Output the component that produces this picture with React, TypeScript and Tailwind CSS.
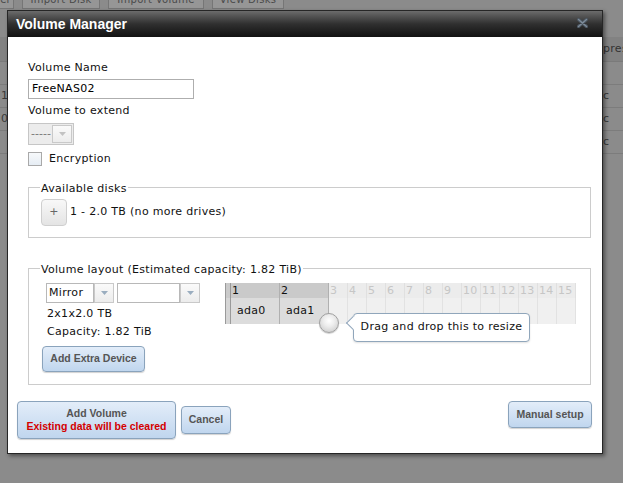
import React from 'react'

const smallCols = [3, 4, 5, 6, 7, 8, 9, 10, 11, 12, 13, 14, 15]

const blueButton =
  "rounded-[4px] border border-[#8aa3bc] bg-linear-to-b from-[#e3edf9] to-[#c0d6ee] shadow-[0_1px_1px_rgba(0,0,0,0.18)] font-['Liberation_Sans',Arial,sans-serif] text-[10.5px] font-bold text-[#555] tracking-normal"

function ArrowBox({ light }: { light?: boolean }) {
  return (
    <div className="flex h-full w-[20px] items-center justify-center border border-[#c9c9c9] bg-linear-to-b from-[#fafafa] to-[#ececec]">
      <svg width="7" height="4" viewBox="0 0 7 4">
        <path d="M0 0 L7 0 L3.5 4 Z" fill={light ? '#c2c2c2' : '#9aadbf'} />
      </svg>
    </div>
  )
}

function BackgroundPage() {
  const rows = [
    { left: '', right: '' },
    { left: '1', right: 'c' },
    { left: '0', right: 'c' },
    { left: '', right: 'c' },
  ]
  return (
    <div className="flex flex-col">
      <div className="flex h-[9px] items-end gap-[8px] overflow-hidden text-[10px] text-[#4a4a4a]">
        <div className="-ml-[20px] flex h-[20px] w-[34px] items-end justify-end border border-[#767676] bg-[#969696] pb-[1px] pr-[2px]">
          er
        </div>
        <div className="flex h-[20px] w-[78px] items-end justify-center border border-[#767676] bg-[#969696] pb-[1px]">
          Import Disk
        </div>
        <div className="flex h-[20px] w-[96px] items-end justify-center border border-[#767676] bg-[#969696] pb-[1px]">
          Import Volume
        </div>
        <div className="flex h-[20px] w-[72px] items-end justify-center border border-[#767676] bg-[#969696] pb-[1px]">
          View Disks
        </div>
      </div>
      <div className="mt-[28px] flex h-[25px] items-center justify-end border-b border-[#7a7a7a] bg-[#828282] text-[#333]">
        <span className="w-[20px]">pres</span>
      </div>
      {rows.map((r, i) => (
        <div
          key={i}
          className="flex h-[23px] items-center justify-between border-b border-[#7c7c7c] text-[#3a3a3a]"
        >
          <span className="pl-[1px]">{r.left}</span>
          <span className="w-[20px]">{r.right}</span>
        </div>
      ))}
    </div>
  )
}

function LayoutGrid() {
  return (
    <div className="relative w-[352px]">
      <div className="flex h-[15px] leading-[15px]">
        <div className="w-[6px] border-x border-[#9a9a9a] bg-[#cacaca]" />
        {[1, 2].map((n) => (
          <div key={n} className="w-[49px] border-r border-[#b0b0b0] bg-[#cacaca] pl-[1px] text-[#111]">
            {n}
          </div>
        ))}
        {smallCols.map((n) => (
          <div key={n} className="w-[19px] border-r border-[#e0e0e0] bg-[#ececec] pl-[1px] text-[#c6c6c6]">
            {n}
          </div>
        ))}
      </div>
      <div className="flex h-[26px] leading-[26px]">
        <div className="w-[6px] border-x border-[#9a9a9a] bg-[#d6d6d6]" />
        {['ada0', 'ada1'].map((d) => (
          <div key={d} className="w-[49px] border-r border-[#b0b0b0] bg-[#dcdcdc] pl-[6px] text-[#111]">
            {d}
          </div>
        ))}
        {smallCols.map((n) => (
          <div key={n} className="w-[19px] border-r border-[#e2e2e2] bg-[#f0f0f0]" />
        ))}
      </div>

      <div className="absolute left-[94px] top-[30px] h-[20px] w-[20px] rounded-full border border-[#a0a0a0] bg-[radial-gradient(circle_at_50%_38%,#ffffff_0%,#ececec_40%,#c4c4c4_100%)] shadow-[0_1px_1px_rgba(0,0,0,0.2)]" />

      <div className="absolute left-[128px] top-[30px] flex h-[29px] w-[177px] items-center justify-center rounded-[4px] border border-[#90a6bb] bg-white text-[#111] shadow-[0_1px_2px_rgba(0,0,0,0.12)]">
        <div className="absolute -left-[6px] top-[4px] h-[10px] w-[10px] rotate-45 border-b border-l border-[#90a6bb] bg-white" />
        <span className="relative">Drag and drop this to resize</span>
      </div>
    </div>
  )
}

function Dialog() {
  return (
    <div className="absolute left-[7px] top-[10px] flex h-[444px] w-[596px] flex-col border border-[#262626] bg-white shadow-[2px_2px_4px_rgba(0,0,0,0.45)]">
      <div className="flex h-[26px] items-center justify-between bg-linear-to-b from-[#6c6c6c] via-[#303030] to-[#121212] pl-[8px] pr-[14px]">
        <span className="font-['Liberation_Sans',Arial,sans-serif] text-[14px] font-bold tracking-normal text-white">
          Volume Manager
        </span>
        <svg width="11" height="10" viewBox="0 0 11 10" className="-mt-[3px]">
          <path d="M1.5 1.5 L9.5 8.5 M9.5 1.5 L1.5 8.5" stroke="#4a545e" strokeWidth="3.4" strokeLinecap="round" />
          <path d="M1.5 1.5 L9.5 8.5 M9.5 1.5 L1.5 8.5" stroke="#7d8b99" strokeWidth="1.4" strokeLinecap="round" />
        </svg>
      </div>

      <div className="flex flex-1 flex-col pt-[24px] text-[#111]">
        <div className="flex flex-col pl-[20px]">
          <label className="h-[14px] leading-[14px]">Volume Name</label>
          <div className="mt-[4px] flex h-[20px] w-[166px] items-center border border-[#aeaeae] pl-[3px] text-black">
            FreeNAS02
          </div>

          <label className="mt-[5px] h-[14px] leading-[14px]">Volume to extend</label>
          <div className="mt-[5px] flex h-[22px] w-[46px] border border-[#c6c6c6] bg-[#ececec]">
            <div className="flex w-[22px] items-center overflow-hidden whitespace-nowrap pl-[2px] tracking-normal text-[#777]">
              -----
            </div>
            <div className="p-[1px]">
              <ArrowBox light />
            </div>
          </div>

          <div className="mt-[7px] flex h-[14px] items-center gap-[7px]">
            <div className="h-[14px] w-[14px] border border-[#a9a9a9] bg-linear-to-b from-[#f7f9fb] to-[#e6edf4]" />
            <span>Encryption</span>
          </div>

          <fieldset className="mt-[12px] w-[563px] border border-[#cccccc] pb-[11px] pl-[11px] pt-[3px]">
            <legend className="px-[1px] pt-[4px] leading-[14px]">Available disks</legend>
            <div className="flex items-center gap-[3px]">
              <div className="ml-[1px] flex h-[27px] w-[26px] items-center justify-center rounded-[4px] border border-[#cfcfcf] bg-linear-to-b from-[#f8f8f8] to-[#e4e4e4] text-[#666]">
                +
              </div>
              <span>1 - 2.0 TB (no more drives)</span>
            </div>
          </fieldset>

          <fieldset className="mt-[21px] w-[563px] border border-[#cccccc] pb-[12px] pl-[11px] pt-[6px]">
            <legend className="px-[1px] pt-[4px] leading-[14px]">Volume layout (Estimated capacity: 1.82 TiB)</legend>
            <div className="flex gap-[25px]">
              <div className="flex w-[160px] flex-col">
                <div className="ml-[6px] flex h-[20px] gap-[3px]">
                  <div className="flex h-full">
                    <div className="flex w-[48px] items-center border border-[#b8b8b8] pl-[2px]">Mirror</div>
                    <ArrowBox />
                  </div>
                  <div className="flex h-full">
                    <div className="w-[63px] border border-[#b8b8b8]" />
                    <ArrowBox />
                  </div>
                </div>
                <div className="ml-[6px] mt-[2px] h-[18px] pl-[1px] leading-[18px]">2x1x2.0 TB</div>
                <div className="ml-[6px] h-[18px] pl-[1px] leading-[18px]">Capacity: 1.82 TiB</div>
                <button className={`${blueButton} ml-[2px] mt-[5px] h-[26px] w-[103px]`}>Add Extra Device</button>
              </div>
              <LayoutGrid />
            </div>
          </fieldset>
        </div>

        <div className="mt-[16px] flex items-start justify-between pl-[9px] pr-[10px]">
          <div className="flex items-center gap-[5px]">
            <button className={`${blueButton} flex h-[38px] w-[159px] flex-col items-center justify-center leading-[13px]`}>
              <span>Add Volume</span>
              <span className="text-[#d40000]">Existing data will be cleared</span>
            </button>
            <button className={`${blueButton} h-[28px] w-[50px]`}>Cancel</button>
          </div>
          <button className={`${blueButton} h-[27px] w-[84px]`}>Manual setup</button>
        </div>
      </div>
    </div>
  )
}

export default function App() {
  return (
    <div className="relative h-[483px] w-[623px] overflow-hidden bg-[#8b8b8b] font-['DejaVu_Sans',Verdana,sans-serif] text-[11px] tracking-[0.3px]">
      <BackgroundPage />
      <Dialog />
    </div>
  )
}
